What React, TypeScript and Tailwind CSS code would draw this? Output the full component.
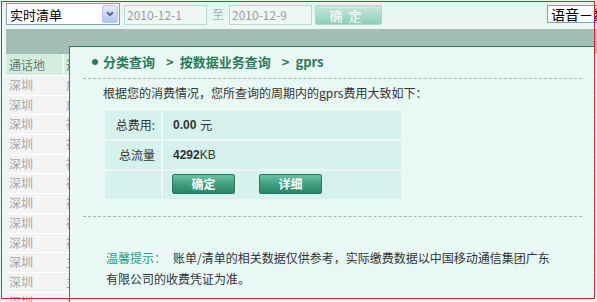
import React from "react";

const places = ["深圳", "深圳", "深圳", "深圳", "深圳", "深圳", "深圳", "深圳", "深圳", "深圳", "深圳", "深圳"];
const kinds = ["广州", "广州", "被叫", "被叫", "被叫", "被叫", "被叫", "被叫", "被叫", "主叫", "主叫", "主叫"];

function SelectBox() {
  return (
    <div className="flex h-[22px] w-[114px] shrink-0 items-center justify-between border border-[#7f9db9] bg-white pl-[3px] pr-[1px]">
      <span className="text-[13px] leading-none text-black">实时清单</span>
      <span className="flex h-[18px] w-[16px] items-center justify-center rounded-[2px] border border-[#b5c7ee] bg-gradient-to-b from-[#e4ecfc] to-[#b3c6f1]">
        <svg width="8" height="6" viewBox="0 0 8 6">
          <path d="M1 1.2 L4 4.2 L7 1.2" fill="none" stroke="#4b5f86" strokeWidth="1.8" />
        </svg>
      </span>
    </div>
  );
}

function DateInput({ value }: { value: string }) {
  return (
    <div className="flex h-[20px] w-[83px] shrink-0 items-center border border-[#bcd8cf] bg-[#eef8f5] pl-[2px] text-[12px] leading-none text-[#9a9a9a]">
      {value}
    </div>
  );
}

function GreenButton({ label }: { label: string }) {
  return (
    <div className="flex h-[20px] w-[63px] items-center justify-center rounded-[2px] border border-[#287a5f] bg-gradient-to-b from-[#6cc1a4] via-[#3f9f80] to-[#2c8566] text-[12px] font-bold leading-none text-white">
      {label}
    </div>
  );
}

export default function App() {
  return (
    <div className="relative h-[302px] w-[597px] overflow-hidden bg-[#eaf7f4] font-['Noto_Sans_CJK_SC',sans-serif] text-[12px]">
      {/* toolbar */}
      <div className="flex h-[29px] items-start bg-gradient-to-b from-[#e3f4ef] to-[#edf9f6] pl-[6px] pt-[3px]">
        <SelectBox />
        <div className="ml-[4px] mt-[2px]">
          <DateInput value="2010-12-1" />
        </div>
        <span className="ml-[5px] mt-[4px] text-[12px] leading-[14px] text-[#a9b5b2]">至</span>
        <div className="ml-[5px] mt-[2px]">
          <DateInput value="2010-12-9" />
        </div>
        <div className="ml-[3px] mt-[2px] flex h-[20px] w-[67px] items-center justify-center rounded-[2px] border border-[#a8d8ca] bg-gradient-to-b from-[#c6eadf] to-[#8fcdba] text-[13px] leading-none tracking-[6px] text-white">
          确定
        </div>
        <div className="flex-1" />
        <div className="mt-[2px] flex h-[18px] w-[50px] shrink-0 items-center overflow-hidden whitespace-nowrap border border-r-0 border-[#7f9db9] bg-white pl-[3px] text-[14px] leading-none text-black">
          语音－数据
        </div>
      </div>

      {/* gray band */}
      <div className="ml-[6px] h-[25px] bg-[#a4bdb6]" />

      {/* background table */}
      <div className="ml-[6px] flex flex-col">
        <div className="grid h-[21px] grid-cols-[56px_60px] gap-x-[2px] text-[12px] leading-[21px] text-[#6a7a75]">
          <div className="bg-[#d3eede] pl-[3px]">通话地</div>
          <div className="bg-[#d3eede] pl-[2px]">通话类型</div>
        </div>
        {places.map((p, i) => (
          <div
            key={i}
            className="grid h-[19.7px] grid-cols-[56px_60px] gap-x-[2px] border-t border-white text-[12px] leading-[18px] text-[#a6a6a6]"
          >
            <div className="bg-[#f3f3f3] pl-[3px]">{p}</div>
            <div className="bg-[#f3f3f3] pl-[2px]">{kinds[i]}</div>
          </div>
        ))}
      </div>

      {/* query result dialog */}
      <div className="absolute left-[69px] top-[46px] h-[260px] w-[526px] border-l border-t border-[#2b8069] bg-[#e9f8f5] px-[13px]">
        <div className="mt-[5px] flex h-[20px] items-center text-[13px] font-bold text-[#2b7a5c]">
          <span className="ml-[9px] mr-[5px] h-[6px] w-[6px] shrink-0 rounded-full bg-[#2b7a5c]" />
          <span>分类查询</span>
          <span className="ml-[11px] mr-[6px]">&gt;</span>
          <span>按数据业务查询</span>
          <span className="ml-[11px] mr-[6px]">&gt;</span>
          <span>gprs</span>
        </div>
        <div className="mt-[6px] border-t border-dashed border-[#a7b6b2]" />
        <div className="mt-[4px] pl-[20px] leading-[20px] text-[#333]">
          根据您的消费情况，您所查询的周期内的gprs费用大致如下：
        </div>

        <div className="ml-[22px] mt-[8px] grid w-[296px] grid-cols-[56px_238px] gap-[2px]">
          <div className="flex h-[28px] items-center justify-end bg-[#d7f2ed] pr-[6px] text-[#333]">总费用:</div>
          <div className="flex h-[28px] items-center bg-[#d7f2ed] pl-[10px] text-[#333]">
            <span className="font-['Liberation_Sans',sans-serif] text-[12px] font-bold">0.00</span>
            <span className="ml-[4px]">元</span>
          </div>
          <div className="flex h-[28px] items-center justify-end bg-[#d7f2ed] pr-[6px] text-[#333]">总流量</div>
          <div className="flex h-[28px] items-center bg-[#d7f2ed] pl-[10px] text-[#333]">
            <span className="font-['Liberation_Sans',sans-serif] text-[12px] font-bold">4292</span>
            <span className="font-['Liberation_Sans',sans-serif] text-[12px]">KB</span>
          </div>
          <div className="h-[28px] bg-[#d7f2ed]" />
          <div className="flex h-[28px] items-start gap-[24px] bg-[#d7f2ed] pl-[9px] pt-[3px]">
            <GreenButton label="确定" />
            <GreenButton label="详细" />
          </div>
        </div>

        <div className="mt-[17px] border-t border-dashed border-[#a7b6b2]" />

        <div className="mt-[30px] pl-[23px] leading-[21px] text-[#333]">
          <span className="text-[#1f9e88]">温馨提示：</span>
          <span className="ml-[7px]">账单/清单的相关数据仅供参考，实际缴费数据以中国移动通信集团广东</span>
          <br />
          有限公司的收费凭证为准。
        </div>
      </div>

      {/* red outline frame */}
      <div className="pointer-events-none absolute left-[1px] top-[1px] h-[298px] w-[594px] border border-[#c62a2a]" />
    </div>
  );
}
